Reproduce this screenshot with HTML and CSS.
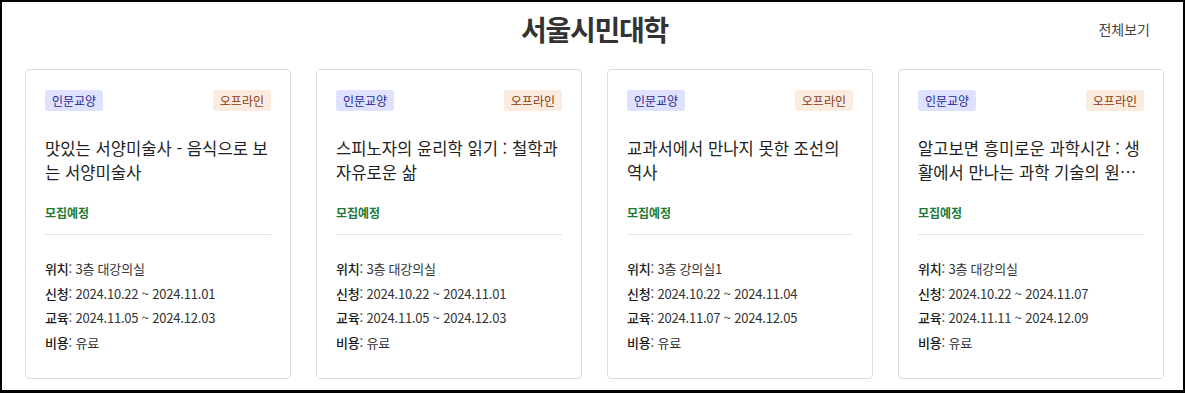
FILE: index.html
```html
<!DOCTYPE html>
<html lang="ko">
<head>
<meta charset="UTF-8">
<meta name="viewport" content="width=device-width, initial-scale=1.0">
<title>서울시민대학</title>
<link rel="stylesheet" href="styles.css">
</head>
<body>

<div class="frame">
  <div class="header">
    <div></div>
    <h2 class="title">서울시민대학</h2>
    <a class="more" href="#">전체보기</a>
  </div>

  <div class="cards">
    <div class="card">
      <div class="tags">
        <span class="tag tag-blue">인문교양</span>
        <span class="tag tag-orange">오프라인</span>
      </div>
      <p class="card-title">맛있는 서양미술사 - 음식으로 보는 서양미술사</p>
      <p class="status">모집예정</p>
      <ul class="info">
        <li><b>위치</b>: 3층 대강의실</li>
        <li><b>신청</b>: 2024.10.22 ~ 2024.11.01</li>
        <li><b>교육</b>: 2024.11.05 ~ 2024.12.03</li>
        <li><b>비용</b>: 유료</li>
      </ul>
    </div>

    <div class="card">
      <div class="tags">
        <span class="tag tag-blue">인문교양</span>
        <span class="tag tag-orange">오프라인</span>
      </div>
      <p class="card-title">스피노자의 윤리학 읽기 : 철학과 자유로운 삶</p>
      <p class="status">모집예정</p>
      <ul class="info">
        <li><b>위치</b>: 3층 대강의실</li>
        <li><b>신청</b>: 2024.10.22 ~ 2024.11.01</li>
        <li><b>교육</b>: 2024.11.05 ~ 2024.12.03</li>
        <li><b>비용</b>: 유료</li>
      </ul>
    </div>

    <div class="card">
      <div class="tags">
        <span class="tag tag-blue">인문교양</span>
        <span class="tag tag-orange">오프라인</span>
      </div>
      <p class="card-title">교과서에서 만나지 못한 조선의 역사</p>
      <p class="status">모집예정</p>
      <ul class="info">
        <li><b>위치</b>: 3층 강의실1</li>
        <li><b>신청</b>: 2024.10.22 ~ 2024.11.04</li>
        <li><b>교육</b>: 2024.11.07 ~ 2024.12.05</li>
        <li><b>비용</b>: 유료</li>
      </ul>
    </div>

    <div class="card">
      <div class="tags">
        <span class="tag tag-blue">인문교양</span>
        <span class="tag tag-orange">오프라인</span>
      </div>
      <p class="card-title">알고보면 흥미로운 과학시간 : 생활에서 만나는 과학 기술의 원리와 응용</p>
      <p class="status">모집예정</p>
      <ul class="info">
        <li><b>위치</b>: 3층 대강의실</li>
        <li><b>신청</b>: 2024.10.22 ~ 2024.11.07</li>
        <li><b>교육</b>: 2024.11.11 ~ 2024.12.09</li>
        <li><b>비용</b>: 유료</li>
      </ul>
    </div>
  </div>
</div>

</body>
</html>
```

FILE: styles.css
```css
* {
  box-sizing: border-box;
}
body {
  margin: 0;
  background-color: #fff;
  font-family: "Noto Sans CJK KR", "Noto Sans", sans-serif;
  color: #222;
}
.frame {
  height: 393px;
  border-style: solid;
  border-color: #000;
  border-width: 2px 2px 3px 2px;
  padding: 0 19px 0 23px;
}
.header {
  height: 54px;
  display: grid;
  grid-template-columns: 1fr auto 1fr;
  align-items: center;
}
.title {
  margin: 0;
  font-size: 28px;
  font-weight: 700;
  letter-spacing: -1.3px;
  color: #333;
}
.more {
  justify-self: end;
  margin-right: 14px;
  font-size: 14px;
  color: #444;
  text-decoration: none;
}
.cards {
  margin-top: 13px;
  display: grid;
  grid-template-columns: repeat(4, 1fr);
  gap: 25px;
}
.card {
  height: 310px;
  border: 1px solid #dcdcdc;
  border-radius: 4px;
  padding: 20px 19px 20px 19px;
}
.tags {
  display: flex;
  justify-content: space-between;
}
.tag {
  height: 21px;
  line-height: 21px;
  padding: 0 7px;
  border-radius: 3px;
  font-size: 12px;
}
.tag-blue {
  background-color: #dfe2ff;
  color: #1f1f96;
}
.tag-orange {
  background-color: #fcece0;
  color: #8a3a10;
}
.card-title {
  margin: 25px 0 0 0;
  font-size: 16.6px;
  line-height: 24px;
  height: 48px;
  color: #222;
  word-break: break-all;
  overflow: hidden;
  display: -webkit-box;
  -webkit-line-clamp: 2;
  -webkit-box-orient: vertical;
}
.status {
  margin: 20px 0 0 0;
  padding-bottom: 12px;
  border-bottom: 1px solid #e4e4e4;
  font-size: 12px;
  line-height: 18px;
  font-weight: 700;
  color: #1d7a33;
}
.info {
  list-style: none;
  margin: 22px 0 0 0;
  padding: 0;
  font-size: 13px;
  line-height: 24.7px;
  letter-spacing: -0.2px;
  color: #333;
}
.info b {
  font-weight: 500;
  color: #1a1a1a;
}
```
